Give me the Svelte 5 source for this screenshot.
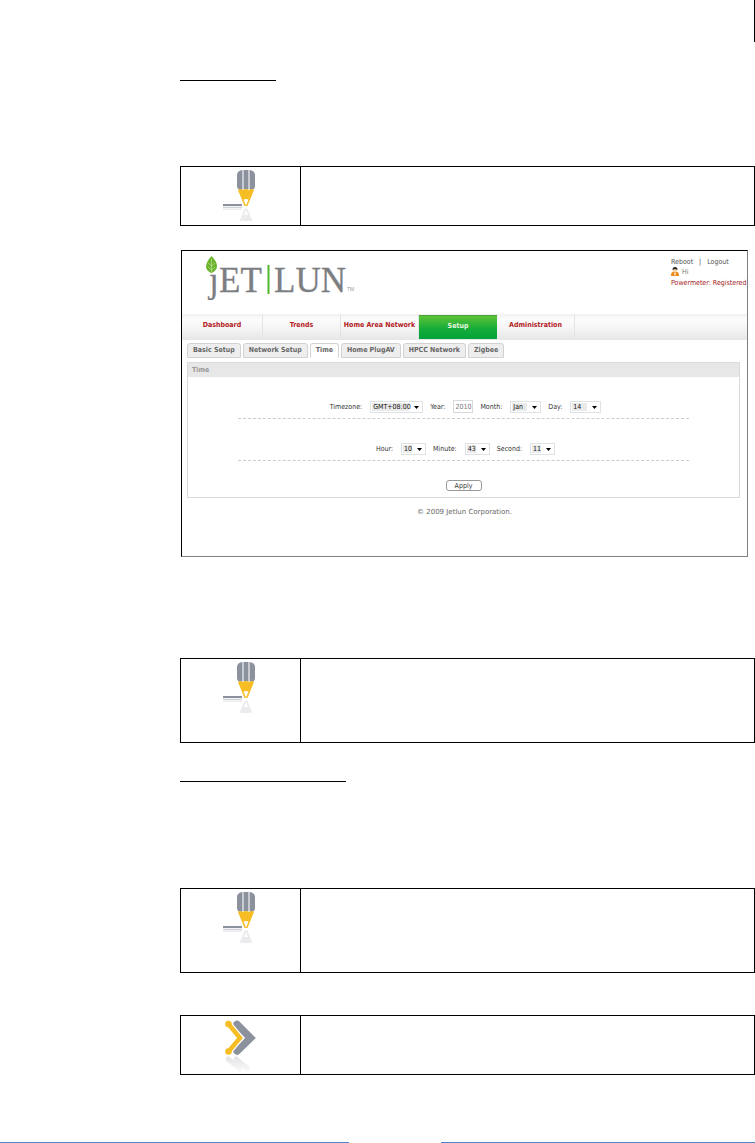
<script>
  const mainMenu = ['Dashboard', 'Trends', 'Home Area Network', 'Setup', 'Administration'];
  const tabs = ['Basic Setup', 'Network Setup', 'Time', 'Home PlugAV', 'HPCC Network', 'Zigbee'];

  let activeMenu = $state('Setup');
  let activeTab = $state('Time');

  const rows = [
    [
      { id: 'timezone', label: 'Timezone:', value: 'GMT+08:00', size: 'wide' },
      { id: 'year', label: 'Year:', value: '2010', input: true },
      { id: 'month', label: 'Month:', value: 'Jan', size: 'medium' },
      { id: 'day', label: 'Day:', value: '14', size: 'medium' },
    ],
    [
      { id: 'hour', label: 'Hour:', value: '10', size: 'small' },
      { id: 'minute', label: 'Minute:', value: '43', size: 'small' },
      { id: 'second', label: 'Second:', value: '11', size: 'small' },
    ],
  ];
</script>

{#snippet pencil()}
  <svg class="note-icon" width="51" height="54" viewBox="0 0 51 54" aria-hidden="true">
    <path d="M22 5q0-4 5-5h8q5 1 5 5v12q-1 3-4 3l-2-1h-6l-2 1q-3 0-4-3z" fill="#8b919d" />
    <path d="M28 0v20M34 0v20" stroke="#f2f2f5" stroke-width="1.2" />
    <path d="M23 20q2-2 4.500 0 3.500-2 7 0 2.500-2 4.500 0l-6.500 16h-3z" fill="#f6bd24" />
    <path d="M28.500 29.500q2.500-1 5 0L31 35.500z" fill="#fff" />
    <path d="M8 35h19" stroke="#8b919d" stroke-width="2" />
    <path d="M8 37.500h19" stroke="#cfd2d7" stroke-width="1.500" />
    <path d="M8 39.500h19" stroke="#ececef" stroke-width="1" />
    <path d="M29.500 38.500h3l5 13-3-1-3.500 1-3.500-1-3 1z" fill="#ebebee" />
    <path d="M31 40l2 5h-4z" fill="#fff" />
  </svg>
{/snippet}

{#snippet arrows()}
  <svg class="note-icon" width="51" height="54" viewBox="0 0 51 54" aria-hidden="true">
    <defs>
      <linearGradient id="fade" x1="0" y1="37" x2="0" y2="52" gradientUnits="userSpaceOnUse">
        <stop offset="0" stop-color="#e0e1e4" />
        <stop offset="1" stop-color="#fafafa" />
      </linearGradient>
    </defs>
    <g fill="none" stroke-linecap="round">
      <path d="M13 40l12 10M21 40l12 10" stroke="url(#fade)" stroke-width="5" />
      <path d="M22 5.500L35.500 19 22 32" stroke="#8b929e" stroke-width="7.500" />
      <path d="M13.500 5L25 19 13.500 32.500" stroke="#fff" stroke-width="7" />
      <path d="M13.500 5L25 19 13.500 32.500" stroke="#f6bd24" stroke-width="4.500" />
    </g>
    <circle cx="13.500" cy="5" r="3.300" fill="#f6bd24" />
    <circle cx="13.500" cy="32.500" r="3.300" fill="#f6bd24" />
  </svg>
{/snippet}

<div class="page">
  <div class="header-rule"></div>
  <main>
    <div class="heading-rule"></div>

    <div class="note first">
      <div class="note-cell">{@render pencil()}</div>
    </div>

    <section class="screen">
      <header>
        <svg class="logo" width="154" height="48" viewBox="0 0 154 48" role="img" aria-label="Jetlun">
          <g fill="#7d7e82" stroke="#7d7e82" stroke-width=".3" font-family="'Liberation Serif', serif" font-size="35">
            <text x="5" y="37">ȷ</text>
            <text x="15" y="37">ET</text>
            <text x="70" y="37">LUN</text>
          </g>
          <text x="143" y="36" fill="#999" font-family="'Liberation Sans', sans-serif" font-size="5">TM</text>
          <path d="M64.500 10v29" stroke="#4db82e" stroke-width="2" />
          <path d="M7.500 1q6 6 5.500 11-1 4-5.500 6-5-2-5.500-6Q2 7 7.500 1z" fill="#6ab42c" />
          <path d="M7.500 4v13M4 8l3.500 3 3.500-3M4 12l3.500 3 3.500-3" stroke="#b9dc8f" stroke-width=".8" fill="none" />
        </svg>
        <div class="account">
          <div class="links">
            <a href="#reboot">Reboot</a><span>|</span><a href="#logout">Logout</a>
          </div>
          <div class="user">
            <svg width="8" height="9" viewBox="0 0 8 9" aria-hidden="true">
              <path d="M0 9q0-4 2-4h4q2 0 2 4z" fill="#f08a1d" />
              <circle cx="4" cy="3.200" r="2.300" fill="#fbd3a4" />
              <path d="M1.500 3q0-3 2.500-3t2.500 3L4 2z" fill="#222" />
              <path d="M3 6h2L4 9z" fill="#fff" />
            </svg>
            <span>Hi</span>
          </div>
          <div class="status">Powermeter: Registered</div>
        </div>
      </header>

      <nav class="menu">
        {#each mainMenu as item}
          <button class:active={item === activeMenu} onclick={() => (activeMenu = item)}>{item}</button>
        {/each}
      </nav>

      <div class="tabs">
        {#each tabs as tab}
          <button class:active={tab === activeTab} onclick={() => (activeTab = tab)}>{tab}</button>
        {/each}
      </div>

      <form class="panel" onsubmit={(e) => e.preventDefault()}>
        <h3>Time</h3>
        {#each rows as row}
          <div class="row">
            {#each row as field}
              <div class="field">
                <label for={field.id}>{field.label}</label>
                {#if field.input}
                  <input id={field.id} type="text" value={field.value} />
                {:else}
                  <div class="select {field.size}">
                    <select id={field.id}>
                      <option>{field.value}</option>
                    </select>
                    <svg width="5" height="3" viewBox="0 0 5 3" aria-hidden="true">
                      <path d="M0 0h5L2.500 3z" fill="#000" />
                    </svg>
                  </div>
                {/if}
              </div>
            {/each}
          </div>
        {/each}
        <button class="apply" type="submit">Apply</button>
      </form>

      <p class="copyright">© 2009 Jetlun Corporation.</p>
    </section>

    <div class="note tall second">
      <div class="note-cell">{@render pencil()}</div>
    </div>

    <div class="heading-rule long"></div>

    <div class="note tall third">
      <div class="note-cell">{@render pencil()}</div>
    </div>

    <div class="note last">
      <div class="note-cell">{@render arrows()}</div>
    </div>
  </main>
  <footer></footer>
</div>

<style>
  :global(body) {
    background: #fff;
  }

  .page {
    font-family: 'DejaVu Sans Condensed', 'DejaVu Sans', sans-serif;
    font-size: 7px;
    line-height: 10px;
    color: #444;
  }

  button,
  input,
  select {
    font: inherit;
    color: inherit;
    margin: 0;
    padding: 0;
    box-sizing: border-box;
  }

  .header-rule {
    height: 42px;
    border-right: 1px solid #000;
  }

  main {
    padding-left: 180px;
  }

  .heading-rule {
    width: 96px;
    margin-top: 38px;
    border-top: 1px solid #000;
  }

  .heading-rule.long {
    width: 166px;
  }

  .note {
    display: grid;
    grid-template-columns: 120px 1fr;
    min-height: 60px;
    box-sizing: border-box;
    border: 1px solid #000;
  }

  .note.tall {
    min-height: 85px;
  }

  .note.first {
    margin-top: 85px;
  }

  .note.second {
    margin-top: 101px;
  }

  .note.third {
    margin-top: 106px;
  }

  .note.last {
    margin-top: 42px;
  }

  .note-cell {
    border-right: 1px solid #000;
  }

  .note-icon {
    display: block;
    margin: 3px auto 0;
  }

  .screen {
    margin: 24px 7px 0 1px;
    min-height: 307px;
    box-sizing: border-box;
    border: 1px solid #808080;
    border-top-color: #000;
    border-left-color: #000;
  }

  header {
    display: flex;
    justify-content: space-between;
    height: 63px;
  }

  .logo {
    margin: 4px 0 0 22px;
  }

  .account {
    padding-top: 6px;
    width: 76px;
    white-space: nowrap;
  }

  .links {
    display: flex;
    gap: 6px;
  }

  a {
    color: #555;
    text-decoration: none;
  }

  .user {
    display: flex;
    align-items: center;
    gap: 3px;
    height: 9px;
    color: #777;
  }

  .status {
    margin-top: 2px;
    color: #a3201d;
  }

  .menu {
    display: flex;
    height: 26px;
    background: linear-gradient(#f1f1f1, #fcfcfc 20%, #f5f5f5 55%, #e6e6e6);
  }

  .menu button {
    width: 78px;
    border: 0;
    border-right: 1px solid #e4e4e4;
    background: none;
    color: #b2201c;
    font-weight: bold;
    white-space: nowrap;
    padding-bottom: 4px;
  }

  .menu button:first-child {
    width: 81px;
  }

  .menu button.active {
    margin: 1px 0;
    border: 0;
    border-top: 1px solid #4c9c35;
    background: linear-gradient(#5cc336, #17ac3a 55%, #00a33b);
    color: #e9f8e2;
  }

  .tabs {
    display: flex;
    gap: 2px;
    margin: 3px 0 0 5px;
  }

  .tabs button {
    height: 15px;
    padding: 0 5px 2px;
    border: 1px solid #d2d2d2;
    border-radius: 3px 3px 0 0;
    background: #eee;
    color: #666;
    font-weight: bold;
  }

  .tabs button.active {
    border-bottom-color: #fff;
    background: #fff;
  }

  .panel {
    margin: 4px 7px 0 5px;
    min-height: 136px;
    box-sizing: border-box;
    border: 1px solid #dadada;
    color: #333;
  }

  h3 {
    margin: 0;
    padding: 2px 4px;
    background: #e7e7e7;
    color: #999;
    font-size: 7px;
  }

  .row {
    display: flex;
    justify-content: center;
    align-items: flex-end;
    gap: 7px;
    height: 42px;
    margin: 0 50px;
    padding: 0 0 5px 4px;
    box-sizing: border-box;
    border-bottom: 1px dashed #ccc;
  }

  .field {
    display: flex;
    align-items: center;
    gap: 8px;
  }

  input {
    width: 20px;
    height: 13px;
    padding-left: 1px;
    border: 1px solid #d6dade;
    color: #777;
  }

  .select {
    position: relative;
  }

  .select svg {
    position: absolute;
    right: 4px;
    top: 5px;
    pointer-events: none;
  }

  select {
    display: block;
    width: 100%;
    height: 12px;
    padding-left: 2px;
    appearance: none;
    border: 1px solid #dde2e6;
    border-radius: 0;
    background: linear-gradient(#eaeaea, #eaeaea) 1px 1px / calc(100% - 14px) 8px no-repeat #fff;
    color: #111;
  }

  .wide {
    width: 53px;
  }

  .medium {
    width: 31px;
  }

  .small {
    width: 25px;
  }

  .apply {
    display: block;
    width: 36px;
    height: 11px;
    margin: 19px auto 0;
    border: 1px solid #999;
    border-radius: 3px;
    background: #fff;
    line-height: 8px;
  }

  .copyright {
    margin: 9px 0 0;
    text-align: center;
    font-family: 'DejaVu Sans', sans-serif;
    color: #666;
  }

  footer {
    display: grid;
    grid-template-columns: 349fr 92px 314fr;
    margin-top: 67px;
  }

  footer::before,
  footer::after {
    content: '';
    border-top: 1px solid #4a86c8;
  }

  footer::after {
    grid-column: 3;
  }
</style>
